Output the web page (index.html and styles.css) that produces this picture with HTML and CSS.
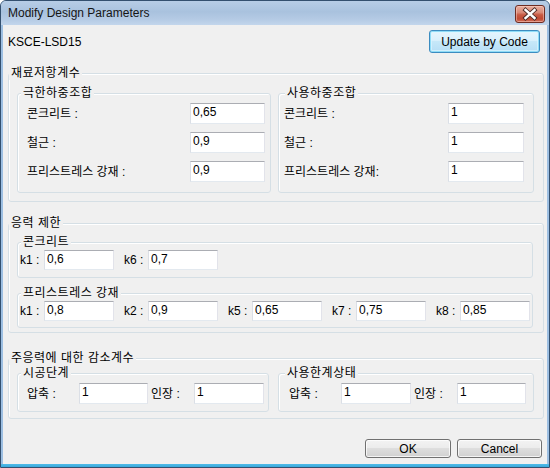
FILE: index.html
```html
<!DOCTYPE html>
<html lang="ko">
<head>
<meta charset="utf-8">
<title>Modify Design Parameters</title>
<link rel="stylesheet" href="styles.css">
</head>
<body>
<div class="window">
  <div class="titlebar">
    <span class="title">Modify Design Parameters</span>
    <span class="close">
      <svg width="28" height="16" viewBox="0 0 28 16">
        <path d="M9.5 4 L18.5 12 M18.5 4 L9.5 12" stroke="#4a2a26" stroke-width="4.2" stroke-linecap="square" fill="none"/>
        <path d="M9.5 4 L18.5 12 M18.5 4 L9.5 12" stroke="#ffffff" stroke-width="2.4" stroke-linecap="square" fill="none"/>
      </svg>
    </span>
  </div>
  <div class="client">
    <div class="toprow">
      <span>KSCE-LSD15</span>
      <button class="btn btn-default">Update by Code</button>
    </div>

    <div class="group g1">
      <div class="gtitle">재료저항계수</div>
      <div class="pair2 pair2-a">
        <div class="group ia-left">
          <div class="gtitle t-left">극한하중조합</div>
          <div class="frows">
            <div class="frow"><span>콘크리트 :</span><input class="tb w75" type="text" value="0,65"></div>
            <div class="frow"><span>철근 :</span><input class="tb w75" type="text" value="0,9"></div>
            <div class="frow"><span>프리스트레스 강재 :</span><input class="tb w75" type="text" value="0,9"></div>
          </div>
        </div>
        <div class="group ia-right">
          <div class="gtitle t-right">사용하중조합</div>
          <div class="frows">
            <div class="frow"><span>콘크리트 :</span><input class="tb w76" type="text" value="1"></div>
            <div class="frow"><span>철근 :</span><input class="tb w76" type="text" value="1"></div>
            <div class="frow"><span>프리스트레스 강재:</span><input class="tb w76" type="text" value="1"></div>
          </div>
        </div>
      </div>
    </div>

    <div class="group g2">
      <div class="gtitle">응력 제한</div>
      <div class="group ic">
        <div class="gtitle t-k">콘크리트</div>
        <div class="krow">
          <div class="kpair"><span>k1 :</span><input class="tb k" type="text" value="0,6"></div>
          <div class="kpair"><span>k6 :</span><input class="tb k" type="text" value="0,7"></div>
        </div>
      </div>
      <div class="group ip">
        <div class="gtitle t-k">프리스트레스 강재</div>
        <div class="krow">
          <div class="kpair"><span>k1 :</span><input class="tb k" type="text" value="0,8"></div>
          <div class="kpair"><span>k2 :</span><input class="tb k" type="text" value="0,9"></div>
          <div class="kpair"><span>k5 :</span><input class="tb k" type="text" value="0,65"></div>
          <div class="kpair"><span>k7 :</span><input class="tb k" type="text" value="0,75"></div>
          <div class="kpair"><span>k8 :</span><input class="tb k" type="text" value="0,85"></div>
        </div>
      </div>
    </div>

    <div class="group g3">
      <div class="gtitle">주응력에 대한 감소계수</div>
      <div class="pair2 pair2-c">
        <div class="group ic-left">
          <div class="gtitle t-left">시공단계</div>
          <div class="crow">
            <span class="la">압축 :</span><input class="tb w69" type="text" value="1">
            <span class="lb">인장 :</span><input class="tb w70" type="text" value="1">
          </div>
        </div>
        <div class="group ic-right">
          <div class="gtitle t-right2">사용한계상태</div>
          <div class="crow">
            <span class="la">압축 :</span><input class="tb w70" type="text" value="1">
            <span class="lb">인장 :</span><input class="tb w69" type="text" value="1">
          </div>
        </div>
      </div>
    </div>

    <div class="btnrow">
      <button class="btn ok">OK</button>
      <button class="btn cancel">Cancel</button>
    </div>
  </div>
</div>
</body>
</html>
```

FILE: styles.css
```css
* { box-sizing: border-box; }

body {
  margin: 0;
  font: 12px/14px "Liberation Sans", "Noto Sans CJK KR", sans-serif;
  color: #000;
  background: #fff;
}

.window {
  width: 550px;
  height: 468px;
  border: 1px solid #34506f;
  border-radius: 6px 6px 0 0;
  overflow: hidden;
  display: flex;
  flex-direction: column;
  background: linear-gradient(to top, #3aa9dc 0, #4fbbe8 3px, #9dbfe2 3px);
}

.titlebar {
  height: 24px;
  flex: none;
  display: flex;
  align-items: flex-start;
  background: linear-gradient(#b7cde6 0%, #a9c2de 45%, #b4cae4 75%, #c3d6ec 100%);
}

.title {
  margin: 5px 0 0 7px;
  line-height: 14px;
  color: #151515;
}

.close {
  margin: 4px 4px 0 auto;
  width: 30px;
  height: 18px;
  border: 1px solid #6e2c22;
  border-radius: 3px;
  background: linear-gradient(#e9ad9e 0%, #d98a78 40%, #c75a44 55%, #c04a34 80%, #d2705a 100%);
  box-shadow: inset 0 0 0 1px rgba(255, 220, 210, 0.45);
  display: flex;
  align-items: center;
  justify-content: center;
}

.close svg { display: block; }

.client {
  flex: 1;
  margin: 0 2px 3px;
  background: #f0f0f0;
  padding: 5px 3px 0 5px;
}

.toprow {
  display: flex;
  justify-content: space-between;
  align-items: center;
  height: 23px;
  padding-right: 4px;
}

.btn {
  font: inherit;
  line-height: 14px;
  height: 19px;
  padding: 0;
  margin: 0;
  color: #000;
  border: 1px solid #707070;
  border-radius: 3px;
  background: linear-gradient(#f3f3f3 0%, #ececec 45%, #dedede 50%, #d0d0d0 100%);
  box-shadow: inset 0 0 0 1px rgba(255, 255, 255, 0.75);
}

.btn-default {
  width: 111px;
  height: 23px;
  border-color: #3c8cc0;
  background: linear-gradient(#e6f5fd 0%, #d9f0fc 45%, #c6e8f9 50%, #b6def5 100%);
  box-shadow: inset 0 0 0 1px #8fdcf7, inset 0 0 0 2px rgba(220, 245, 255, 0.7);
}

.ok { width: 86px; }
.cancel { width: 85px; }

.group {
  border: 1px solid #d5dfe5;
  border-radius: 3px;
  box-shadow: inset 1px 1px 0 #ffffff;
}

.gtitle {
  width: fit-content;
  margin: -8px 0 0 -8px;
  padding: 0 2px;
  line-height: 14px;
  letter-spacing: 0.5px;
  background: #f0f0f0;
  white-space: nowrap;
}

.tb {
  font: inherit;
  line-height: 14px;
  height: 21px;
  margin: 0;
  padding: 0 2px 3px 2px;
  color: #000;
  background: #fff;
  border: 1px solid;
  border-color: #abadb3 #e2e3ea #e3e9ef #dbdfe6;
  border-radius: 0;
  outline: none;
}

.w75 { width: 75px; }
.w76 { width: 76px; }
.w69 { width: 69px; }
.w70 { width: 70px; }

/* group 1 */
.g1 {
  margin-top: 20px;
  padding: 0 9px 8px 8px;
}

.pair2 {
  display: flex;
}

.pair2-a {
  margin-top: 13px;
  gap: 7px;
}

.ia-left {
  width: 254px;
  padding: 0 5px 10px 9px;
}

.ia-right {
  width: 256px;
  padding: 0 9px 10px 5px;
}

.t-left { margin-left: -6px; }
.t-right { margin-left: 1px; }

.frows {
  margin-top: 3px;
  display: flex;
  flex-direction: column;
  gap: 8px;
}

.frow {
  display: flex;
  justify-content: space-between;
  align-items: center;
  height: 21px;
}

/* group 2 */
.g2 {
  margin-top: 21px;
  padding: 0 10px 4px 8px;
}

.ic {
  margin-top: 12px;
  padding: 0 2px 7px 2px;
}

.ip {
  margin-top: 15px;
  padding: 0 2px 6px 2px;
}

.t-k { margin-left: 1px; }

.krow {
  margin-top: 1px;
  display: flex;
  gap: 10px;
}

.kpair {
  display: flex;
  align-items: center;
}

.kpair span { width: 24px; }

.tb.k {
  width: 70px;
  height: 20px;
  padding-bottom: 2px;
}

/* group 3 */
.g3 {
  margin-top: 25px;
  padding: 0 9px 6px 8px;
}

.pair2-c {
  margin-top: 8px;
  gap: 9px;
}

.ic-left {
  width: 252px;
  padding: 0 0 7px 9px;
}

.ic-right {
  width: 256px;
  padding: 0 0 7px 10px;
}

.t-right2 { margin-left: -4px; }

.crow {
  margin-top: 3px;
  display: flex;
  align-items: center;
  height: 21px;
}

.la { width: 52px; }
.lb { width: 46px; padding-left: 3px; }

/* bottom buttons */
.btnrow {
  display: flex;
  justify-content: flex-end;
  gap: 6px;
  margin-top: 20px;
  padding-right: 2px;
}
```
